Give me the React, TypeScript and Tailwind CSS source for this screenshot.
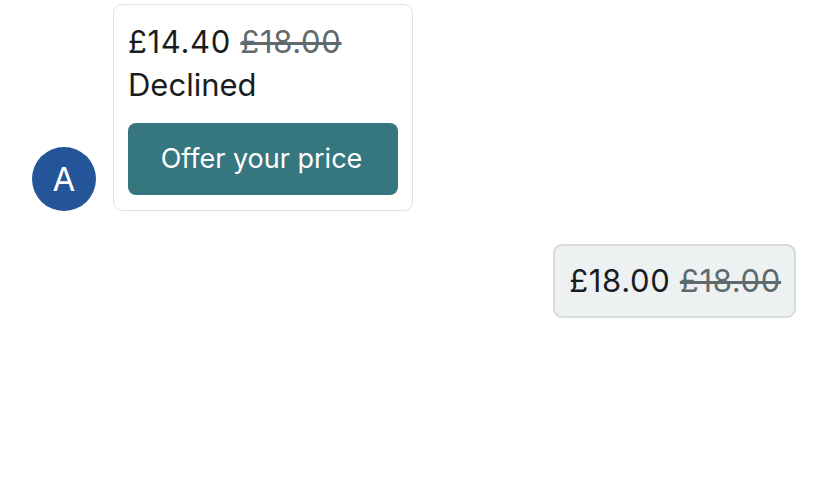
import React from "react";

export default function App() {
  return (
    <div
      className="w-[828px] h-[484px] bg-white text-[#1a1d1e]"
      style={{ fontFamily: "Inter, 'Noto Sans', sans-serif" }}
    >
      <div className="flex flex-col pt-[4px] px-[32px] gap-[33px]">
        <div className="flex items-end gap-[17px]">
          <div className="w-[64px] h-[64px] rounded-full bg-[#245598] flex items-center justify-center text-white text-[33px] leading-none">
            A
          </div>
          <div className="w-[300px] border border-[#e0e0e0] rounded-[9px] bg-white px-[14px] pt-[15px] pb-[15px]">
            <div className="text-[31px] leading-[43px] whitespace-nowrap tracking-[0.65px]">
              £14.40{" "}
              <span className="line-through decoration-[3px] text-[#5e6a6c] decoration-[#5e6a6c]">£18.00</span>
            </div>
            <div className="text-[31px] leading-[43px]">Declined</div>
            <button className="mt-[17px] w-full h-[72px] rounded-[8px] bg-[#35767f] text-white text-[27px] pr-[3px]">
              Offer your price
            </button>
          </div>
        </div>
        <div className="flex justify-end">
          <div className="border-2 border-[#d6dbdc] rounded-[9px] bg-[#eef1f2] pl-[14px] pr-[13px] h-[74px] flex items-center text-[31px] whitespace-nowrap tracking-[0.65px]">
            £18.00&nbsp;
            <span className="line-through decoration-[3px] text-[#5e6a6c] decoration-[#5e6a6c]">£18.00</span>
          </div>
        </div>
      </div>
    </div>
  );
}
